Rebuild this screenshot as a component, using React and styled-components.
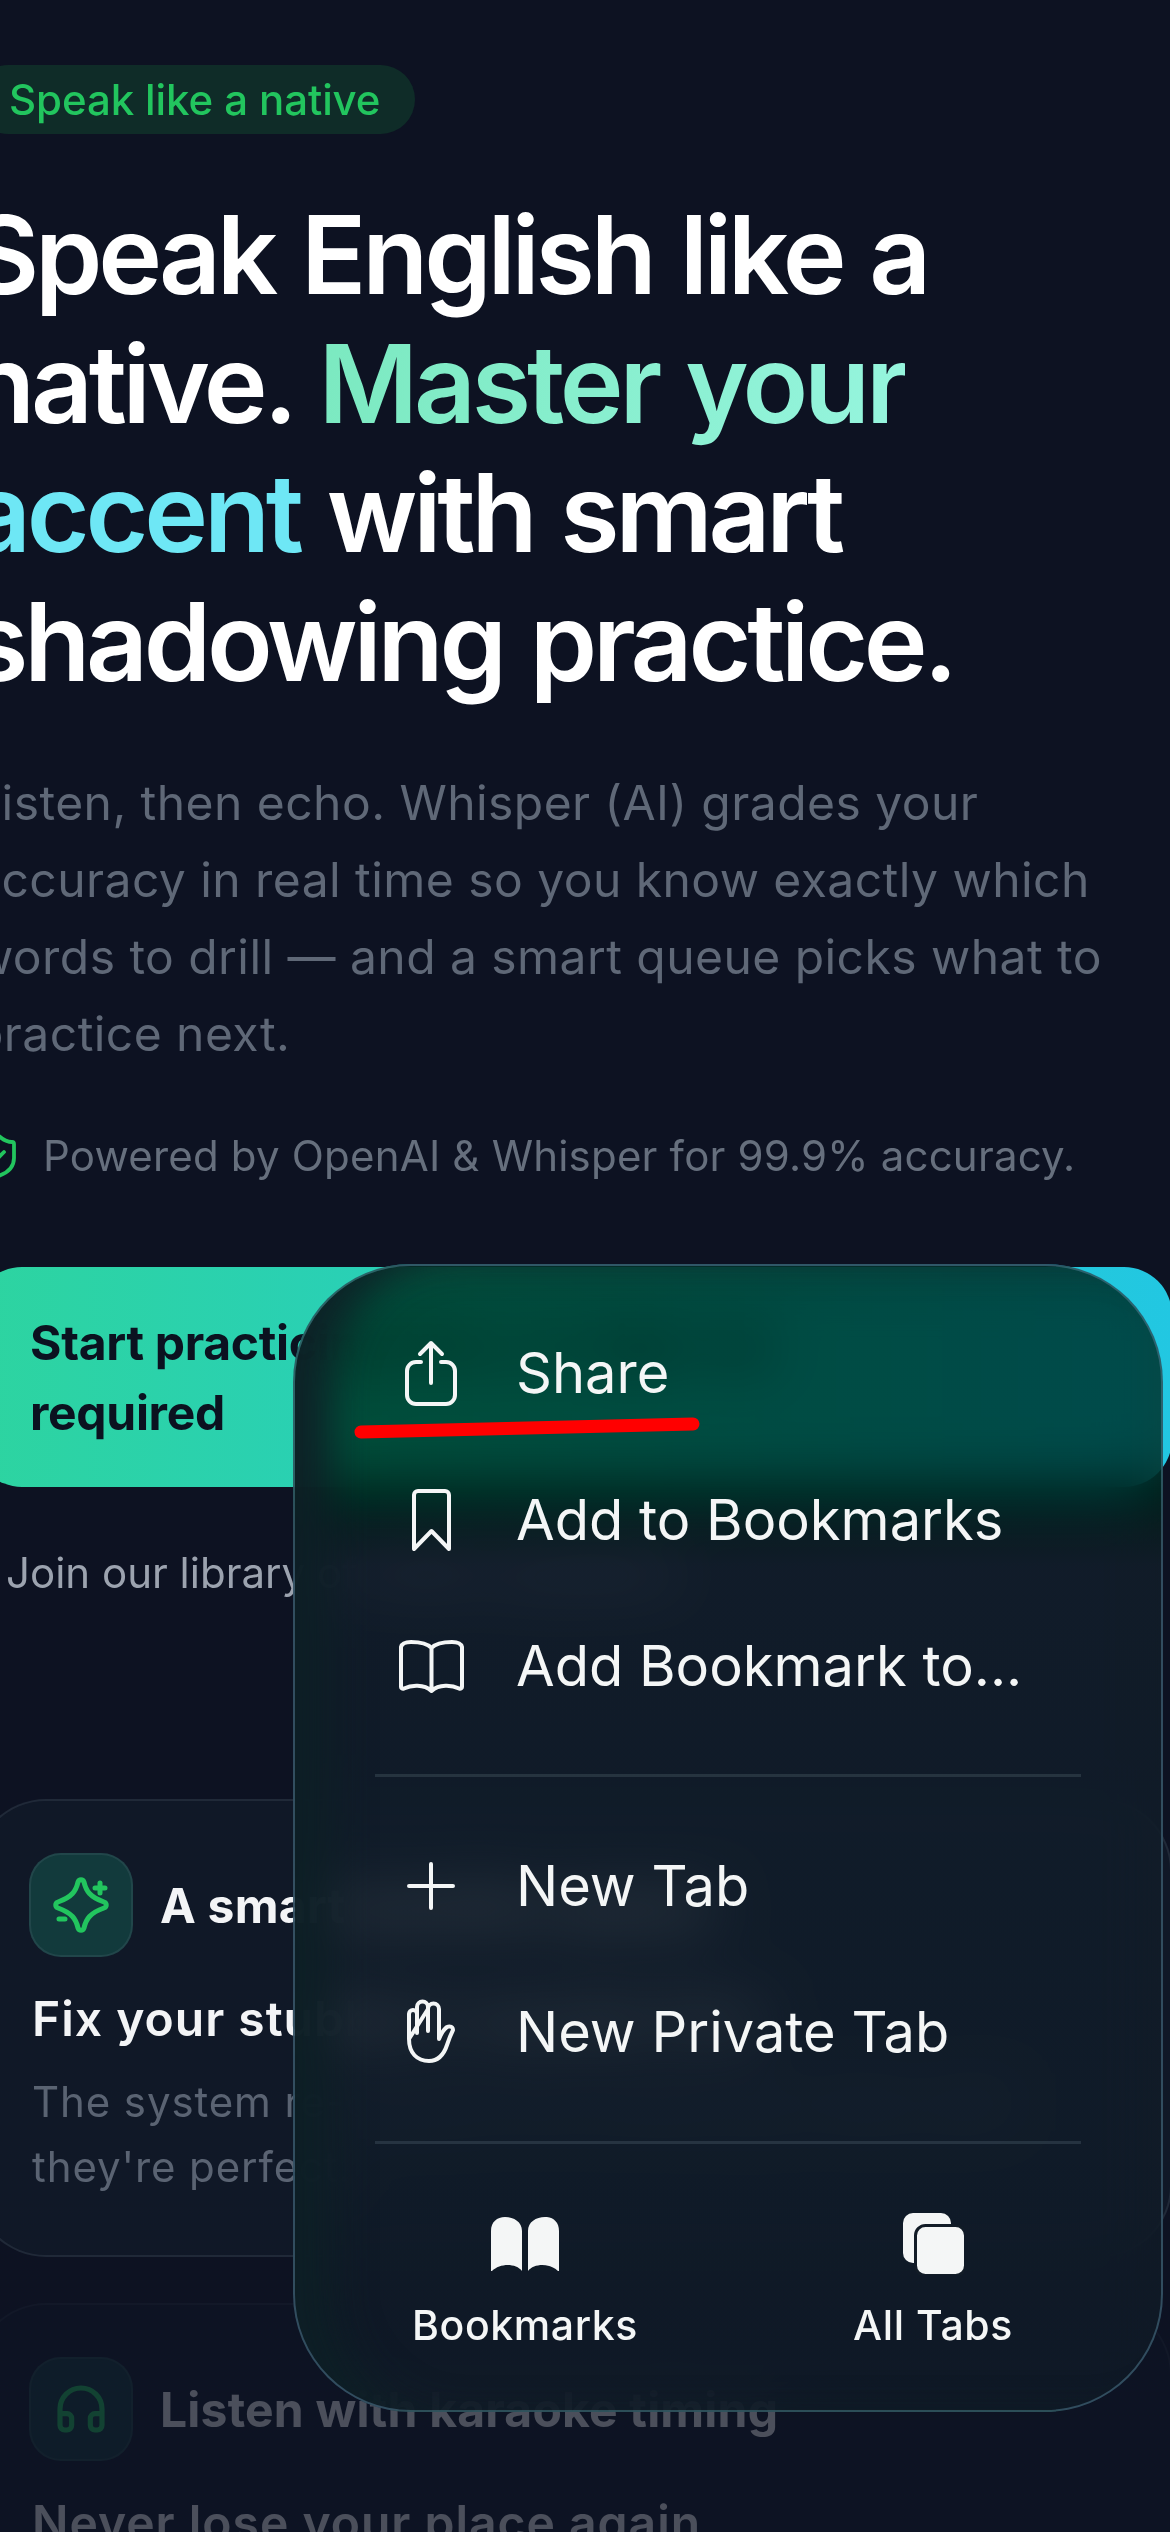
import React from "react";
import styled, { createGlobalStyle } from "styled-components";
import { ShieldCheck, Headphones } from "lucide-react";

const Global = createGlobalStyle`
  html, body { margin: 0; padding: 0; background: #0d1222; }
  * { box-sizing: border-box; }
`;

const Screen = styled.div`
  position: relative;
  width: 1170px;
  height: 2532px;
  overflow: hidden;
  background: #0d1222;
  font-family: Inter, "Noto Sans", sans-serif;
`;

const Content = styled.main`
  width: 1198px;
  margin-left: -26px;
  padding-top: 65px;
  display: flex;
  flex-direction: column;
  align-items: flex-start;
`;

const Badge = styled.span`
  display: inline-flex;
  align-items: center;
  height: 69px;
  padding: 0 35px;
  border-radius: 35px;
  background: #0f2c28;
  color: #22c55e;
  font-size: 42px;
  font-weight: 500;
  letter-spacing: -0.1px;
`;

const Headline = styled.h1`
  margin: 56px 0 0 -5px;
  font-size: 108px;
  line-height: 129px;
  font-weight: 600;
  letter-spacing: -4.2px;
  word-spacing: 4px;
  color: #fff;
  white-space: nowrap;
`;

const Accent = styled.span`
  background: linear-gradient(100deg, #7be9c0 0%, #96f5de 100%);
  -webkit-background-clip: text;
  background-clip: text;
  color: transparent;
`;

const AccentCyan = styled.span`
  color: #6ee7f5;
`;

const Lead = styled.p`
  margin: 58px 0 0;
  font-size: 48px;
  line-height: 77px;
  letter-spacing: 0.45px;
  color: #5f6877;
  white-space: nowrap;
`;

const Trust = styled.div`
  margin-top: 52px;
  display: flex;
  align-items: center;
  gap: 21px;
  height: 63px;
  font-size: 42px;
  letter-spacing: 0.2px;
  color: #666f7d;
  svg { color: #22c55e; flex: none; }
`;

const Cta = styled.a`
  display: block;
  width: 100%;
  margin-top: 80px;
  height: 220px;
  padding: 41px 56px;
  border-radius: 48px;
  background: linear-gradient(90deg, #2dd4a0 0%, #22c7e2 100%);
  color: #0b1220;
  font-size: 48px;
  line-height: 70px;
  font-weight: 700;
  letter-spacing: -0.3px;
`;

const Join = styled.p`
  margin: 56px 0 0 32px;
  font-size: 42px;
  line-height: 60px;
  color: #9ca3af;
`;

const Card = styled.section`
  width: 100%;
  margin-top: ${(p) => p.$gap}px;
  padding: 52px 60px 56px 53px;
  border-radius: 72px;
  border: 2px solid rgba(148, 163, 184, 0.12);
  background: #101827;
  opacity: ${(p) => p.$dim};
`;

const CardHead = styled.div`
  display: flex;
  align-items: center;
  gap: 27px;
`;

const IconTile = styled.div`
  width: 104px;
  height: 104px;
  flex: none;
  border-radius: 32px;
  display: flex;
  align-items: center;
  justify-content: center;
  background: #123a3c;
  border: 2px solid rgba(148, 163, 184, 0.12);
  color: #22c55e;
`;

const CardTitle = styled.h2`
  margin: 0;
  font-size: 48px;
  font-weight: 700;
  letter-spacing: 0.2px;
  color: #f3f4f6;
  white-space: nowrap;
`;

const CardSub = styled.h3`
  margin: 32px 0 0 3px;
  font-size: 48px;
  line-height: 60px;
  font-weight: 600;
  letter-spacing: 1px;
  color: #f3f4f6;
  white-space: nowrap;
`;

const CardBody = styled.p`
  margin: 20px 0 0 3px;
  font-size: 42px;
  line-height: 65px;
  letter-spacing: 0.9px;
  color: #5a6372;
`;

const Menu = styled.div`
  position: absolute;
  left: 293px;
  top: 1264px;
  width: 870px;
  height: 1148px;
  padding-top: 34px;
  border-radius: 118px;
  border: 2px solid rgba(78, 120, 142, 0.55);
  background: linear-gradient(
    180deg,
    rgba(0, 30, 18, 0.76) 0,
    rgba(0, 30, 18, 0.76) 225px,
    rgba(19, 31, 41, 0.76) 300px,
    rgba(17, 27, 37, 0.76) 100%
  );
  box-shadow: inset 50px 0 40px -14px rgba(14, 32, 38, 0.94);
  backdrop-filter: blur(30px) saturate(1.5);
  color: #f4f6f6;
`;

const MenuGroup = styled.div`
  padding: 0 80px;
`;

const MenuRow = styled.div`
  height: 146.5px;
  display: flex;
  align-items: center;
  gap: 29px;
  font-size: 56px;
  font-weight: 400;
`;

const RowIcon = styled.span`
  width: 112px;
  flex: none;
  display: flex;
  justify-content: center;
  svg {
    display: block;
    fill: none;
    stroke: currentColor;
    stroke-width: 4;
    stroke-linecap: round;
    stroke-linejoin: round;
    overflow: visible;
  }
`;

const Divider = styled.hr`
  margin: ${(p) => p.$before}px 0 ${(p) => p.$after}px;
  border: 0;
  height: 3px;
  background: rgba(148, 170, 185, 0.17);
`;

const Footer = styled.div`
  display: grid;
  grid-template-columns: 408px 408px;
  padding: 0 26px;
`;

const FooterItem = styled.div`
  display: flex;
  flex-direction: column;
  align-items: center;
  font-size: 41px;
  font-weight: 500;
  letter-spacing: 0.6px;
  svg { display: block; height: 62px; fill: currentColor; }
`;

const FooterLabel = styled.span`
  margin-top: 25px;
  line-height: 50px;
`;

const Scribble = styled.svg`
  position: absolute;
  left: 353px;
  top: 1416px;
  width: 348px;
  height: 24px;
`;

const SparkleIcon = () => (
  <svg width="64" height="64" viewBox="0 0 64 64" fill="none" stroke="currentColor" strokeWidth="5" strokeLinecap="round" strokeLinejoin="round">
    <path d="M29 9c1-3 5-3 6 0 2 9 6 15 20 20 3 1 3 5 0 6-14 5-18 11-20 20-1 3-5 3-6 0-2-9-6-15-20-20-3-1-3-5 0-6 14-5 18-11 20-20z" />
    <path d="M51 10v10M46 15h10M10 46h6" />
  </svg>
);
const ShareIcon = () => (
  <svg width="52" height="65" viewBox="0 0 52 65">
    <path d="M16 21H11a9 9 0 0 0-9 9v24a9 9 0 0 0 9 9h30a9 9 0 0 0 9-9V30a9 9 0 0 0-9-9H36" />
    <path d="M26 42V2M15 13L26 2l11 11" />
  </svg>
);
const BookmarkIcon = () => (
  <svg width="39" height="62" viewBox="0 0 39 62">
    <path d="M2 6a4 4 0 0 1 4-4h27a4 4 0 0 1 4 4v54L19.5 42 2 60z" />
  </svg>
);
const BookIcon = () => (
  <svg width="65" height="53" viewBox="0 0 65 53">
    <path d="M32.5 8C28 3 20 2 12 2 8 2 3 3 2 7v40c0 1 1 2 3 1.5C12 45 25 44 32.5 51 40 44 53 45 60 48.5c2 .5 3-.5 3-1.5V7c-1-4-6-5-10-5-8 0-16 1-20.5 6zM32.5 8v43" />
  </svg>
);
const PlusIcon = () => (
  <svg width="48" height="48" viewBox="0 0 48 48">
    <path d="M2 24h44M24 2v44" />
  </svg>
);
const HandIcon = () => (
  <svg width="48" height="62" viewBox="0 0 48 62">
    <path d="M2 38V13a4 4 0 0 1 8 0v19M10 13V6a5.5 5.5 0 0 1 11 0v24M21 8a5.500 5.500 0 0 1 11 0v30c2-5 5-10 8-12 3-1.500 6 0 6 3-2 4-4 9-6 15-3 9-9 16-18 16C10 60 2 52 2 38z" />
  </svg>
);
const FilledBookIcon = () => (
  <svg width="68" height="54" viewBox="0 0 68 54" style={{ height: 54, marginTop: 4, marginBottom: 4 }}>
    <path d="M0 14C0 5 6 0 14 0c9 0 17 5 17 14v40c-6-8-22-8-30 0H0zM68 14C68 5 62 0 54 0c-9 0-17 5-17 14v40c6-8 22-8 30 0h1z" />
  </svg>
);
const TabsIcon = () => (
  <svg width="61" height="62" viewBox="0 0 61 62">
    <rect x="0" y="0" width="48" height="50" rx="10" />
    <rect x="12.500" y="12.500" width="50" height="50" rx="10" stroke="#121c27" strokeWidth="3" />
  </svg>
);

export default function App() {
  return (
    <Screen>
      <Global />
      <Content>
        <Badge>Speak like a native</Badge>
        <Headline>
          Speak English like a
          <br />
          native. <Accent>Master your</Accent>
          <br />
          <AccentCyan>accent</AccentCyan> with smart
          <br />
          shadowing practice.
        </Headline>
        <Lead>
          Listen, then echo. Whisper (AI) grades your
          <br />
          accuracy in real time so you know exactly which
          <br />
          words to drill — and a smart queue picks what to
          <br />
          practice next.
        </Lead>
        <Trust>
          <ShieldCheck size={48} strokeWidth={1.9} />
          Powered by OpenAI &amp; Whisper for 99.9% accuracy.
        </Trust>
        <Cta>
          Start practicing free, no sign-up
          <br />
          required
        </Cta>
        <Join>Join our library of native speakers</Join>
        <Card $gap={196} $dim={1}>
          <CardHead>
            <IconTile>
              <SparkleIcon />
            </IconTile>
            <CardTitle>A smart practice queue</CardTitle>
          </CardHead>
          <CardSub>Fix your stubborn sounds first</CardSub>
          <CardBody>
            The system re-queues the words you miss until
            <br />
            they're perfect.
          </CardBody>
        </Card>
        <Card $gap={46} $dim={0.27}>
          <CardHead>
            <IconTile>
              <Headphones size={56} strokeWidth={2.2} />
            </IconTile>
            <CardTitle>Listen with karaoke timing</CardTitle>
          </CardHead>
          <CardSub>Never lose your place again</CardSub>
        </Card>
      </Content>

      <Menu>
        <MenuGroup>
          <MenuRow><RowIcon><ShareIcon /></RowIcon>Share</MenuRow>
          <MenuRow><RowIcon><BookmarkIcon /></RowIcon>Add to Bookmarks</MenuRow>
          <MenuRow><RowIcon><BookIcon /></RowIcon>Add Bookmark to...</MenuRow>
          <Divider $before={34} $after={36} />
          <MenuRow><RowIcon><PlusIcon /></RowIcon>New Tab</MenuRow>
          <MenuRow><RowIcon><HandIcon /></RowIcon>New Private Tab</MenuRow>
          <Divider $before={35} $after={69} />
        </MenuGroup>
        <Footer>
          <FooterItem><FilledBookIcon /><FooterLabel>Bookmarks</FooterLabel></FooterItem>
          <FooterItem><TabsIcon /><FooterLabel>All Tabs</FooterLabel></FooterItem>
        </Footer>
      </Menu>

      <Scribble viewBox="0 0 348 24">
        <path d="M8 16L340 8" stroke="#ff0000" strokeWidth="13" strokeLinecap="round" fill="none" />
      </Scribble>
    </Screen>
  );
}
